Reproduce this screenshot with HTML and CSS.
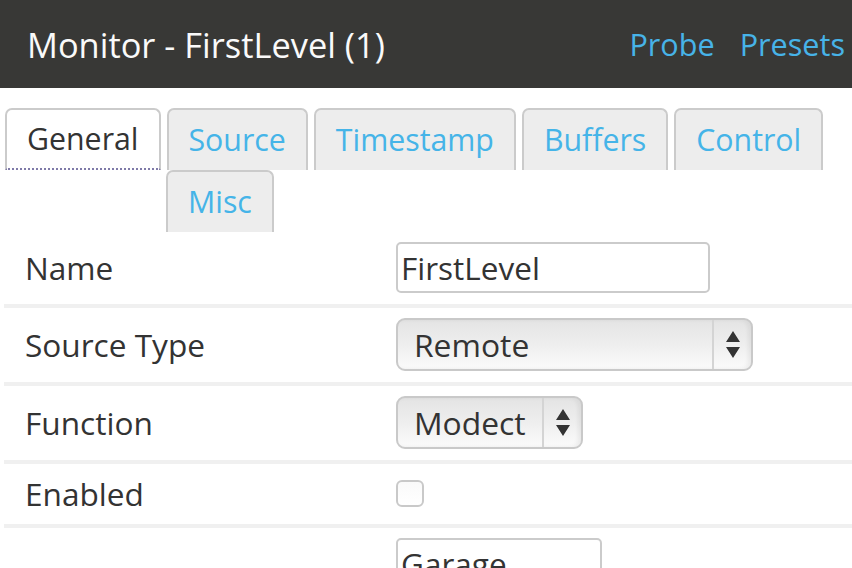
FILE: index.html
```html
<!DOCTYPE html>
<html>
<head>
<meta charset="utf-8">
<link rel="stylesheet" href="styles.css">
</head>
<body>
<header class="topbar">
  <h1 class="title">Monitor - FirstLevel (1)</h1>
  <nav class="toplinks">
    <a class="toplink">Probe</a>
    <a class="toplink">Presets</a>
  </nav>
</header>
<div class="tabs">
  <div class="tab-row">
    <div class="tab active">General</div>
    <div class="tab">Source</div>
    <div class="tab">Timestamp</div>
    <div class="tab">Buffers</div>
    <div class="tab">Control</div>
  </div>
  <div class="tab-row second">
    <div class="tab">Misc</div>
  </div>
</div>
<div class="form">
  <div class="row">
    <div class="label">Name</div>
    <div class="control"><input class="text" type="text" value="FirstLevel"></div>
  </div>
  <div class="row">
    <div class="label">Source Type</div>
    <div class="control">
      <div class="select wide">
        <select class="select-native"><option>Remote</option></select>
        <span class="arrows"><svg width="14" height="27" viewBox="0 0 14 27"><path d="M7 0 L14 11 L0 11 Z M0 16 L14 16 L7 27 Z" fill="#333"/></svg></span>
      </div>
    </div>
  </div>
  <div class="row">
    <div class="label">Function</div>
    <div class="control">
      <div class="select narrow">
        <select class="select-native"><option>Modect</option></select>
        <span class="arrows"><svg width="14" height="27" viewBox="0 0 14 27"><path d="M7 0 L14 11 L0 11 Z M0 16 L14 16 L7 27 Z" fill="#333"/></svg></span>
      </div>
    </div>
  </div>
  <div class="row">
    <div class="label">Enabled</div>
    <div class="control"><span class="checkbox"></span></div>
  </div>
  <div class="row">
    <div class="label"></div>
    <div class="control"><input class="text short" type="text" value="Garage"></div>
  </div>
</div>
</body>
</html>
```

FILE: styles.css
```css
* { box-sizing: border-box; }
html, body { margin: 0; padding: 0; background: #fff; }
body {
  font-family: "Open Sans", "DejaVu Sans", sans-serif;
  color: #333;
  overflow: hidden;
  height: 568px;
}
.topbar {
  height: 88px;
  background: #383836;
  display: flex;
  align-items: center;
  justify-content: space-between;
  padding: 0 7px 0 27px;
}
.title {
  margin: 0;
  font-size: 34.4px;
  font-weight: 400;
  color: #fafafa;
}
.toplinks { display: flex; gap: 25px; }
.toplink {
  color: #47b3e8;
  font-size: 30.6px;
  text-decoration: none;
}
.tabs {
  padding: 20px 0 0 5px;
}
.tab-row { display: flex; gap: 6px; }
.tab-row.second { padding-left: 161px; }
.tab {
  height: 62px;
  padding: 0 20px;
  border: 2px solid #cbcbcb;
  border-bottom: none;
  border-radius: 7px 7px 0 0;
  background: #ededed;
  color: #45b4e8;
  font-size: 30.3px;
  line-height: 60px;
}
.tab.active {
  background: #fff;
  color: #333;
  border-bottom: 2px dotted #7f7aa8;
  line-height: 58px;
}
.form { margin-left: 4px; }
.row {
  display: grid;
  grid-template-columns: 392px 1fr;
  align-items: center;
  padding: 10px 0 11px;
  border-bottom: 4px solid #f0f0f0;
}
.label {
  padding-left: 21px;
  font-size: 31.6px;
  line-height: 39px;
  color: #333;
}
.control { display: flex; align-items: center; }
.text {
  width: 314px;
  height: 51px;
  border: 2px solid #cbcbcb;
  border-radius: 5px;
  padding: 0 4px 0 3px;
  font-family: "Open Sans", "DejaVu Sans", sans-serif;
  font-size: 31.5px;
  color: #333;
  outline: none;
  background: #fff;
}
.text.short { width: 206px; }
.select {
  display: flex;
  height: 53px;
  border: 2px solid #c9c9c9;
  border-radius: 9px;
  background: linear-gradient(#e4e4e4, #eeeeee 50%, #fbfbfb);
  box-shadow: inset -3px 0 4px rgba(0,0,0,0.06);
  overflow: hidden;
}
.select.wide { width: 357px; }
.select.narrow { width: 187px; }
.select-native {
  appearance: none;
  -webkit-appearance: none;
  border: none;
  background: transparent;
  flex: 1;
  min-width: 0;
  padding: 0 0 0 16px;
  font-family: "Open Sans", "DejaVu Sans", sans-serif;
  font-size: 31.8px;
  color: #333;
  outline: none;
}
.arrows {
  width: 39px;
  border-left: 2px solid #d4d4d4;
  display: flex;
  align-items: center;
  justify-content: center;
}
.checkbox {
  display: block;
  width: 28px;
  height: 27px;
  border: 2px solid #c9c9c9;
  border-radius: 6px;
  background: linear-gradient(#fafafa, #fff);
}
```
